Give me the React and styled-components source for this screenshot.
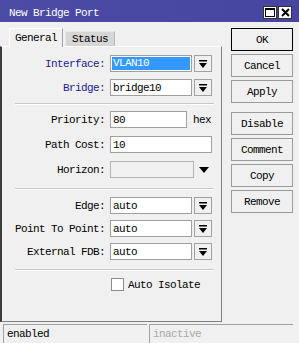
import React from "react";
import styled, { createGlobalStyle } from "styled-components";

const Global = createGlobalStyle`
  html, body { margin: 0; padding: 0; background: #f0f0f0; }
  body {
    font-family: "Liberation Mono", "DejaVu Sans Mono", monospace;
    font-size: 11px;
    letter-spacing: -0.6px;
    color: #000;
  }
  * { box-sizing: border-box; }
`;

const Win = styled.div`
  width: 299px;
  height: 343px;
  display: flex;
  flex-direction: column;
  background: #f0f0f0;
  overflow: hidden;
`;

const TitleBar = styled.div`
  height: 22px;
  flex: none;
  background: linear-gradient(90deg, #4c4ca6, #4646a0);
  color: #fff;
  display: flex;
  align-items: center;
  justify-content: space-between;
  padding: 3px 7px 0 9px;
`;

const TitleButtons = styled.div`
  display: flex;
  gap: 1px;
`;

const TitleBtn = styled.div`
  width: 14px;
  height: 13px;
  background: #fff;
  border: 1px solid #333;
  display: flex;
  align-items: center;
  justify-content: center;
`;

const Main = styled.div`
  flex: none;
  height: 300px;
  display: flex;
`;

const LeftCol = styled.div`
  width: 222px;
  display: flex;
  flex-direction: column;
`;

const Tabs = styled.div`
  display: flex;
  align-items: flex-end;
  padding: 5px 0 0 9px;
  height: 24px;
  gap: 2px;
`;

const Tab = styled.div`
  height: ${(p) => (p.$active ? 19 : 15)}px;
  padding: ${(p) => (p.$active ? "3px 5px 0" : "1px 6px 0")};
  background: ${(p) => (p.$active ? "#f0f0f0" : "#d6d6d6")};
  border-top: 1px solid ${(p) => (p.$active ? "#ffffff" : "#e8e8e8")};
  border-left: 1px solid ${(p) => (p.$active ? "#ffffff" : "#e8e8e8")};
  border-right: 1px solid ${(p) => (p.$active ? "#a0a0a0" : "#b8b8b8")};
  margin-bottom: ${(p) => (p.$active ? "-1px" : "0")};
  position: relative;
  z-index: ${(p) => (p.$active ? 1 : 0)};
`;

const Panel = styled.div`
  flex: 1;
  border-left: 2px solid #3a3a3a;
  border-top: 1px solid #ffffff;
  border-right: 1px solid #808080;
  border-bottom: 1px solid #808080;
  padding-top: 8px;
  display: flex;
  flex-direction: column;
`;

const Section = styled.div`
  display: flex;
  flex-direction: column;
  gap: ${(p) => p.$gap}px;
`;

const Sep = styled.div`
  margin: ${(p) => p.$top}px 7px ${(p) => p.$bottom}px 13px;
  height: 2px;
  border-top: 1px solid #c8c8c8;
  border-bottom: 1px solid #ffffff;
`;

const Row = styled.div`
  display: flex;
  align-items: center;
  height: 17px;
`;

const Label = styled.div`
  width: 103px;
  margin-right: 5px;
  text-align: right;
  white-space: nowrap;
  color: ${(p) => (p.$blue ? "#1a1a96" : "#000")};
`;

const Field = styled.div`
  width: ${(p) => p.$w}px;
  height: 17px;
  border: 1px solid ${(p) => (p.$disabled ? "#b4b4b4" : "#a0a0a0")};
  background: ${(p) => (p.$disabled ? "#f0f0f0" : "#ffffff")};
  padding: 0 2px;
  display: flex;
  align-items: center;
  white-space: nowrap;
  overflow: hidden;
`;

const Selected = styled.span`
  background: #3399ff;
  color: #fff;
  flex: 1;
  height: 13px;
  line-height: 13px;
  margin: 0 -1px;
  padding-left: 1px;
`;

const ArrowBtn = styled.div`
  width: 18px;
  height: 17px;
  margin-left: 2px;
  border: 1px solid #a0a0a0;
  background: #f0f0f0;
  display: flex;
  align-items: center;
  justify-content: center;
`;

const Unit = styled.span`
  margin-left: 6px;
`;

const TriWrap = styled.div`
  margin-left: 5px;
  display: flex;
  align-items: center;
`;

const CheckRow = styled.div`
  display: flex;
  align-items: center;
  margin-left: 109px;
  height: 13px;
`;

const Check = styled.div`
  width: 13px;
  height: 13px;
  background: #fff;
  border: 1px solid #8c8c8c;
  margin-right: 4px;
`;

const RightCol = styled.div`
  padding: 6px 0 0 9px;
  display: flex;
  flex-direction: column;
  gap: 9px;
`;

const BtnGroup = styled.div`
  display: flex;
  flex-direction: column;
  gap: 3px;
`;

const Btn = styled.div`
  width: 62px;
  height: 23px;
  border: 1px solid ${(p) => (p.$default ? "#000" : "#9a9a9a")};
  background: #f0f0f0;
  display: flex;
  align-items: center;
  justify-content: center;
`;

const StatusBar = styled.div`
  flex: 1;
  display: flex;
  gap: 2px;
  padding: 2px 6px 0 3px;
`;

const StatusBox = styled.div`
  width: ${(p) => p.$w}px;
  border-top: 1px solid #a0a0a0;
  border-left: 1px solid #a0a0a0;
  padding: 3px 0 0 3px;
  color: ${(p) => (p.$dim ? "#a8a8a8" : "#000")};
`;

const DropIcon = () => (
  <svg width="8" height="8" viewBox="0 0 8 8">
    <rect x="0" y="0" width="8" height="1.5" fill="#000" />
    <polygon points="0,3 8,3 4,8" fill="#000" />
  </svg>
);

const Combo = ({ label, value, blue, selected }) => (
  <Row>
    <Label $blue={blue}>{label}</Label>
    <Field $w={82}>{selected ? <Selected>{value}</Selected> : value}</Field>
    <ArrowBtn>
      <DropIcon />
    </ArrowBtn>
  </Row>
);

export default function App() {
  return (
    <>
      <Global />
      <Win>
        <TitleBar>
          <span>New Bridge Port</span>
          <TitleButtons>
            <TitleBtn>
              <svg width="10" height="9" viewBox="0 0 10 9">
                <rect x="0.5" y="0.5" width="9" height="8" fill="none" stroke="#000" />
                <rect x="0" y="0" width="10" height="2" fill="#000" />
              </svg>
            </TitleBtn>
            <TitleBtn>
              <svg width="9" height="9" viewBox="0 0 9 9">
                <path d="M1 1 L8 8 M8 1 L1 8" stroke="#000" strokeWidth="2" />
              </svg>
            </TitleBtn>
          </TitleButtons>
        </TitleBar>
        <Main>
          <LeftCol>
            <Tabs>
              <Tab $active>General</Tab>
              <Tab>Status</Tab>
            </Tabs>
            <Panel>
              <Section $gap={7}>
                <Combo label="Interface:" value="VLAN10" blue selected />
                <Combo label="Bridge:" value="bridge10" blue />
              </Section>
              <Sep $top={7} $bottom={6} />
              <Section $gap={8}>
                <Row>
                  <Label>Priority:</Label>
                  <Field $w={77}>80</Field>
                  <Unit>hex</Unit>
                </Row>
                <Row>
                  <Label>Path Cost:</Label>
                  <Field $w={102}>10</Field>
                </Row>
                <Row>
                  <Label>Horizon:</Label>
                  <Field $w={84} $disabled />
                  <TriWrap>
                    <svg width="10" height="6" viewBox="0 0 10 6">
                      <polygon points="0,0 10,0 5,6" fill="#000" />
                    </svg>
                  </TriWrap>
                </Row>
              </Section>
              <Sep $top={10} $bottom={7} />
              <Section $gap={6}>
                <Combo label="Edge:" value="auto" />
                <Combo label="Point To Point:" value="auto" />
                <Combo label="External FDB:" value="auto" />
              </Section>
              <Sep $top={9} $bottom={7} />
              <CheckRow>
                <Check />
                <span>Auto Isolate</span>
              </CheckRow>
            </Panel>
          </LeftCol>
          <RightCol>
            <BtnGroup>
              <Btn $default>OK</Btn>
              <Btn>Cancel</Btn>
              <Btn>Apply</Btn>
            </BtnGroup>
            <BtnGroup>
              <Btn>Disable</Btn>
              <Btn>Comment</Btn>
              <Btn>Copy</Btn>
              <Btn>Remove</Btn>
            </BtnGroup>
          </RightCol>
        </Main>
        <StatusBar>
          <StatusBox $w={145}>enabled</StatusBox>
          <StatusBox $w={145} $dim>inactive</StatusBox>
        </StatusBar>
      </Win>
    </>
  );
}
